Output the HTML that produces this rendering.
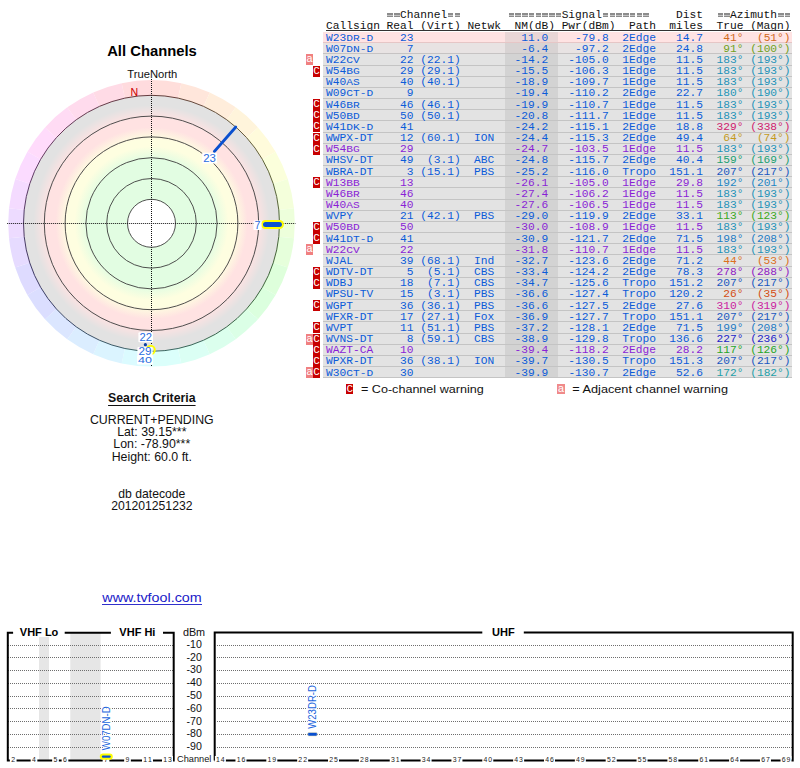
<!DOCTYPE html>
<html><head><meta charset="utf-8">
<style>
html,body{margin:0;padding:0;background:#fff;}
body{width:800px;height:768px;overflow:hidden;position:relative;}
.mono{font-family:"Liberation Mono",monospace;font-size:11.23px;white-space:pre;position:absolute;left:326px;line-height:11px;}
.sm{display:inline-block;transform:scaleY(0.87);transform-origin:50% 78%;}
.g{color:#a8a8a8;}
.hd{color:#111;}
.row{position:absolute;left:323px;width:469px;}
.badge{position:absolute;font-family:"Liberation Mono",monospace;color:#fff;font-size:11px;text-align:center;line-height:11px;}
.sans{font-family:"Liberation Sans",sans-serif;position:absolute;white-space:pre;}
</style></head><body>

<div style="position:absolute;left:387.26px;top:13.0px;width:5.5px;height:1.6px;background:#8c8c8c;"></div>
<div style="position:absolute;left:387.26px;top:15.4px;width:5.5px;height:1.6px;background:#8c8c8c;"></div>
<div style="position:absolute;left:387.26px;top:14.6px;width:5.5px;height:0.8px;background:#c4c4c4;"></div>
<div style="position:absolute;left:394.00px;top:13.0px;width:5.5px;height:1.6px;background:#8c8c8c;"></div>
<div style="position:absolute;left:394.00px;top:15.4px;width:5.5px;height:1.6px;background:#8c8c8c;"></div>
<div style="position:absolute;left:394.00px;top:14.6px;width:5.5px;height:0.8px;background:#c4c4c4;"></div>
<div style="position:absolute;left:447.92px;top:13.0px;width:5.5px;height:1.6px;background:#8c8c8c;"></div>
<div style="position:absolute;left:447.92px;top:15.4px;width:5.5px;height:1.6px;background:#8c8c8c;"></div>
<div style="position:absolute;left:447.92px;top:14.6px;width:5.5px;height:0.8px;background:#c4c4c4;"></div>
<div style="position:absolute;left:454.66px;top:13.0px;width:5.5px;height:1.6px;background:#8c8c8c;"></div>
<div style="position:absolute;left:454.66px;top:15.4px;width:5.5px;height:1.6px;background:#8c8c8c;"></div>
<div style="position:absolute;left:454.66px;top:14.6px;width:5.5px;height:0.8px;background:#c4c4c4;"></div>
<div style="position:absolute;left:508.58px;top:13.0px;width:5.5px;height:1.6px;background:#8c8c8c;"></div>
<div style="position:absolute;left:508.58px;top:15.4px;width:5.5px;height:1.6px;background:#8c8c8c;"></div>
<div style="position:absolute;left:508.58px;top:14.6px;width:5.5px;height:0.8px;background:#c4c4c4;"></div>
<div style="position:absolute;left:515.32px;top:13.0px;width:5.5px;height:1.6px;background:#8c8c8c;"></div>
<div style="position:absolute;left:515.32px;top:15.4px;width:5.5px;height:1.6px;background:#8c8c8c;"></div>
<div style="position:absolute;left:515.32px;top:14.6px;width:5.5px;height:0.8px;background:#c4c4c4;"></div>
<div style="position:absolute;left:522.06px;top:13.0px;width:5.5px;height:1.6px;background:#8c8c8c;"></div>
<div style="position:absolute;left:522.06px;top:15.4px;width:5.5px;height:1.6px;background:#8c8c8c;"></div>
<div style="position:absolute;left:522.06px;top:14.6px;width:5.5px;height:0.8px;background:#c4c4c4;"></div>
<div style="position:absolute;left:528.80px;top:13.0px;width:5.5px;height:1.6px;background:#8c8c8c;"></div>
<div style="position:absolute;left:528.80px;top:15.4px;width:5.5px;height:1.6px;background:#8c8c8c;"></div>
<div style="position:absolute;left:528.80px;top:14.6px;width:5.5px;height:0.8px;background:#c4c4c4;"></div>
<div style="position:absolute;left:535.54px;top:13.0px;width:5.5px;height:1.6px;background:#8c8c8c;"></div>
<div style="position:absolute;left:535.54px;top:15.4px;width:5.5px;height:1.6px;background:#8c8c8c;"></div>
<div style="position:absolute;left:535.54px;top:14.6px;width:5.5px;height:0.8px;background:#c4c4c4;"></div>
<div style="position:absolute;left:542.28px;top:13.0px;width:5.5px;height:1.6px;background:#8c8c8c;"></div>
<div style="position:absolute;left:542.28px;top:15.4px;width:5.5px;height:1.6px;background:#8c8c8c;"></div>
<div style="position:absolute;left:542.28px;top:14.6px;width:5.5px;height:0.8px;background:#c4c4c4;"></div>
<div style="position:absolute;left:549.02px;top:13.0px;width:5.5px;height:1.6px;background:#8c8c8c;"></div>
<div style="position:absolute;left:549.02px;top:15.4px;width:5.5px;height:1.6px;background:#8c8c8c;"></div>
<div style="position:absolute;left:549.02px;top:14.6px;width:5.5px;height:0.8px;background:#c4c4c4;"></div>
<div style="position:absolute;left:555.76px;top:13.0px;width:5.5px;height:1.6px;background:#8c8c8c;"></div>
<div style="position:absolute;left:555.76px;top:15.4px;width:5.5px;height:1.6px;background:#8c8c8c;"></div>
<div style="position:absolute;left:555.76px;top:14.6px;width:5.5px;height:0.8px;background:#c4c4c4;"></div>
<div style="position:absolute;left:602.94px;top:13.0px;width:5.5px;height:1.6px;background:#8c8c8c;"></div>
<div style="position:absolute;left:602.94px;top:15.4px;width:5.5px;height:1.6px;background:#8c8c8c;"></div>
<div style="position:absolute;left:602.94px;top:14.6px;width:5.5px;height:0.8px;background:#c4c4c4;"></div>
<div style="position:absolute;left:609.68px;top:13.0px;width:5.5px;height:1.6px;background:#8c8c8c;"></div>
<div style="position:absolute;left:609.68px;top:15.4px;width:5.5px;height:1.6px;background:#8c8c8c;"></div>
<div style="position:absolute;left:609.68px;top:14.6px;width:5.5px;height:0.8px;background:#c4c4c4;"></div>
<div style="position:absolute;left:616.42px;top:13.0px;width:5.5px;height:1.6px;background:#8c8c8c;"></div>
<div style="position:absolute;left:616.42px;top:15.4px;width:5.5px;height:1.6px;background:#8c8c8c;"></div>
<div style="position:absolute;left:616.42px;top:14.6px;width:5.5px;height:0.8px;background:#c4c4c4;"></div>
<div style="position:absolute;left:623.16px;top:13.0px;width:5.5px;height:1.6px;background:#8c8c8c;"></div>
<div style="position:absolute;left:623.16px;top:15.4px;width:5.5px;height:1.6px;background:#8c8c8c;"></div>
<div style="position:absolute;left:623.16px;top:14.6px;width:5.5px;height:0.8px;background:#c4c4c4;"></div>
<div style="position:absolute;left:629.90px;top:13.0px;width:5.5px;height:1.6px;background:#8c8c8c;"></div>
<div style="position:absolute;left:629.90px;top:15.4px;width:5.5px;height:1.6px;background:#8c8c8c;"></div>
<div style="position:absolute;left:629.90px;top:14.6px;width:5.5px;height:0.8px;background:#c4c4c4;"></div>
<div style="position:absolute;left:636.64px;top:13.0px;width:5.5px;height:1.6px;background:#8c8c8c;"></div>
<div style="position:absolute;left:636.64px;top:15.4px;width:5.5px;height:1.6px;background:#8c8c8c;"></div>
<div style="position:absolute;left:636.64px;top:14.6px;width:5.5px;height:0.8px;background:#c4c4c4;"></div>
<div style="position:absolute;left:643.38px;top:13.0px;width:5.5px;height:1.6px;background:#8c8c8c;"></div>
<div style="position:absolute;left:643.38px;top:15.4px;width:5.5px;height:1.6px;background:#8c8c8c;"></div>
<div style="position:absolute;left:643.38px;top:14.6px;width:5.5px;height:0.8px;background:#c4c4c4;"></div>
<div style="position:absolute;left:717.52px;top:13.0px;width:5.5px;height:1.6px;background:#8c8c8c;"></div>
<div style="position:absolute;left:717.52px;top:15.4px;width:5.5px;height:1.6px;background:#8c8c8c;"></div>
<div style="position:absolute;left:717.52px;top:14.6px;width:5.5px;height:0.8px;background:#c4c4c4;"></div>
<div style="position:absolute;left:724.26px;top:13.0px;width:5.5px;height:1.6px;background:#8c8c8c;"></div>
<div style="position:absolute;left:724.26px;top:15.4px;width:5.5px;height:1.6px;background:#8c8c8c;"></div>
<div style="position:absolute;left:724.26px;top:14.6px;width:5.5px;height:0.8px;background:#c4c4c4;"></div>
<div style="position:absolute;left:778.18px;top:13.0px;width:5.5px;height:1.6px;background:#8c8c8c;"></div>
<div style="position:absolute;left:778.18px;top:15.4px;width:5.5px;height:1.6px;background:#8c8c8c;"></div>
<div style="position:absolute;left:778.18px;top:14.6px;width:5.5px;height:0.8px;background:#c4c4c4;"></div>
<div style="position:absolute;left:784.92px;top:13.0px;width:5.5px;height:1.6px;background:#8c8c8c;"></div>
<div style="position:absolute;left:784.92px;top:15.4px;width:5.5px;height:1.6px;background:#8c8c8c;"></div>
<div style="position:absolute;left:784.92px;top:14.6px;width:5.5px;height:0.8px;background:#c4c4c4;"></div>
<div class="mono hd" style="top:9.8px;">           Channel                 Signal           Dist    Azimuth  </div>
<div class="mono hd" style="top:20.7px;">Callsign Real (Virt) Netwk  NM(dB) Pwr(dBm)  Path  miles  True (Magn)</div>
<div style="position:absolute;left:326px;top:29.8px;width:465px;height:1px;background:#333;"></div>
<div class="row" style="top:32.00px;height:11.17px;background:#ffe3e3;"></div>
<div class="row" style="left:504.5px;width:53.5px;top:32.00px;height:11.17px;background:#e9d6d6;"></div>
<div class="row" style="top:42.17px;height:1px;background:#e6c6c6;"></div>
<div class="mono" style="top:32.60px;color:#0b5bd9;">W23<span class="sm">DR-D</span>    23                11.0    -79.8  2Edge   14.7   <span style="color:#d06a20">41°  (51°)</span></div>
<div class="row" style="top:43.17px;height:11.17px;background:#e8e3e3;"></div>
<div class="row" style="left:504.5px;width:53.5px;top:43.17px;height:11.17px;background:#d8d3d3;"></div>
<div class="row" style="top:53.33px;height:1px;background:#c6c3c3;"></div>
<div class="mono" style="top:43.77px;color:#0b5bd9;">W07<span class="sm">DN-D</span>     7                -6.4    -97.2  2Edge   24.8   <span style="color:#72a020">91° (100°)</span></div>
<div class="row" style="top:54.33px;height:11.17px;background:#e3e3e3;"></div>
<div class="row" style="left:504.5px;width:53.5px;top:54.33px;height:11.17px;background:#d3d3d3;"></div>
<div class="row" style="top:64.50px;height:1px;background:#c4c4c4;"></div>
<div class="mono" style="top:54.93px;color:#0b5bd9;">W22<span class="sm">CV</span>      22 (22.1)        -14.2   -105.0  1Edge   11.5  <span style="color:#1f92b8">183° (193°)</span></div>
<div class="badge" style="left:306px;top:54.33px;width:7px;height:11.17px;background:#f08080;">a</div>
<div class="row" style="top:65.50px;height:11.17px;background:#e3e3e3;"></div>
<div class="row" style="left:504.5px;width:53.5px;top:65.50px;height:11.17px;background:#d3d3d3;"></div>
<div class="row" style="top:75.67px;height:1px;background:#c4c4c4;"></div>
<div class="mono" style="top:66.10px;color:#0b5bd9;">W54<span class="sm">BG</span>      29 (29.1)        -15.5   -106.3  1Edge   11.5  <span style="color:#1f92b8">183° (193°)</span></div>
<div class="badge" style="left:313px;top:65.50px;width:7px;height:11.17px;background:#c70000;">C</div>
<div class="row" style="top:76.67px;height:11.17px;background:#e3e3e3;"></div>
<div class="row" style="left:504.5px;width:53.5px;top:76.67px;height:11.17px;background:#d3d3d3;"></div>
<div class="row" style="top:86.84px;height:1px;background:#c4c4c4;"></div>
<div class="mono" style="top:77.27px;color:#0b5bd9;">W40<span class="sm">AS</span>      40 (40.1)        -18.9   -109.7  1Edge   11.5  <span style="color:#1f92b8">183° (193°)</span></div>
<div class="row" style="top:87.84px;height:11.17px;background:#e3e3e3;"></div>
<div class="row" style="left:504.5px;width:53.5px;top:87.84px;height:11.17px;background:#d3d3d3;"></div>
<div class="row" style="top:98.00px;height:1px;background:#c4c4c4;"></div>
<div class="mono" style="top:88.44px;color:#0b5bd9;">W09<span class="sm">CT-D</span>     9               -19.4   -110.2  2Edge   22.7  <span style="color:#1f96b8">180° (190°)</span></div>
<div class="row" style="top:99.00px;height:11.17px;background:#e3e3e3;"></div>
<div class="row" style="left:504.5px;width:53.5px;top:99.00px;height:11.17px;background:#d3d3d3;"></div>
<div class="row" style="top:109.17px;height:1px;background:#c4c4c4;"></div>
<div class="mono" style="top:99.60px;color:#0b5bd9;">W46<span class="sm">BR</span>      46 (46.1)        -19.9   -110.7  1Edge   11.5  <span style="color:#1f92b8">183° (193°)</span></div>
<div class="badge" style="left:313px;top:99.00px;width:7px;height:11.17px;background:#c70000;">C</div>
<div class="row" style="top:110.17px;height:11.17px;background:#e3e3e3;"></div>
<div class="row" style="left:504.5px;width:53.5px;top:110.17px;height:11.17px;background:#d3d3d3;"></div>
<div class="row" style="top:120.34px;height:1px;background:#c4c4c4;"></div>
<div class="mono" style="top:110.77px;color:#0b5bd9;">W50<span class="sm">BD</span>      50 (50.1)        -20.8   -111.7  1Edge   11.5  <span style="color:#1f92b8">183° (193°)</span></div>
<div class="badge" style="left:313px;top:110.17px;width:7px;height:11.17px;background:#c70000;">C</div>
<div class="row" style="top:121.34px;height:11.17px;background:#e3e3e3;"></div>
<div class="row" style="left:504.5px;width:53.5px;top:121.34px;height:11.17px;background:#d3d3d3;"></div>
<div class="row" style="top:131.50px;height:1px;background:#c4c4c4;"></div>
<div class="mono" style="top:121.94px;color:#0b5bd9;">W41<span class="sm">DK-D</span>    41               -24.2   -115.1  2Edge   18.8  <span style="color:#d0206e">329° (338°)</span></div>
<div class="badge" style="left:313px;top:121.34px;width:7px;height:11.17px;background:#c70000;">C</div>
<div class="row" style="top:132.50px;height:11.17px;background:#e3e3e3;"></div>
<div class="row" style="left:504.5px;width:53.5px;top:132.50px;height:11.17px;background:#d3d3d3;"></div>
<div class="row" style="top:142.67px;height:1px;background:#c4c4c4;"></div>
<div class="mono" style="top:133.10px;color:#0b5bd9;">WWPX-DT    12 (60.1)  ION   -24.4   -115.3  2Edge   49.4   <span style="color:#c49a1e">64°  (74°)</span></div>
<div class="badge" style="left:313px;top:132.50px;width:7px;height:11.17px;background:#c70000;">C</div>
<div class="row" style="top:143.67px;height:11.17px;background:#e3e3e3;"></div>
<div class="row" style="left:504.5px;width:53.5px;top:143.67px;height:11.17px;background:#d3d3d3;"></div>
<div class="row" style="top:153.84px;height:1px;background:#c4c4c4;"></div>
<div class="mono" style="top:144.27px;color:#8a1fd6;">W54<span class="sm">BG</span>      29               -24.7   -103.5  1Edge   11.5  <span style="color:#1f92b8">183° (193°)</span></div>
<div class="badge" style="left:313px;top:143.67px;width:7px;height:11.17px;background:#c70000;">C</div>
<div class="row" style="top:154.84px;height:11.17px;background:#e3e3e3;"></div>
<div class="row" style="left:504.5px;width:53.5px;top:154.84px;height:11.17px;background:#d3d3d3;"></div>
<div class="row" style="top:165.00px;height:1px;background:#c4c4c4;"></div>
<div class="mono" style="top:155.44px;color:#0b5bd9;">WHSV-DT    49  (3.1)  ABC   -24.8   -115.7  2Edge   40.4  <span style="color:#20a070">159° (169°)</span></div>
<div class="row" style="top:166.00px;height:11.17px;background:#e3e3e3;"></div>
<div class="row" style="left:504.5px;width:53.5px;top:166.00px;height:11.17px;background:#d3d3d3;"></div>
<div class="row" style="top:176.17px;height:1px;background:#c4c4c4;"></div>
<div class="mono" style="top:166.60px;color:#0b5bd9;">WBRA-DT     3 (15.1)  PBS   -25.2   -116.0  Tropo  151.1  <span style="color:#1a58c0">207° (217°)</span></div>
<div class="row" style="top:177.17px;height:11.17px;background:#e3e3e3;"></div>
<div class="row" style="left:504.5px;width:53.5px;top:177.17px;height:11.17px;background:#d3d3d3;"></div>
<div class="row" style="top:187.34px;height:1px;background:#c4c4c4;"></div>
<div class="mono" style="top:177.77px;color:#8a1fd6;">W13<span class="sm">BB</span>      13               -26.1   -105.0  1Edge   29.8  <span style="color:#1e86c4">192° (201°)</span></div>
<div class="badge" style="left:313px;top:177.17px;width:7px;height:11.17px;background:#c70000;">C</div>
<div class="row" style="top:188.34px;height:11.17px;background:#e3e3e3;"></div>
<div class="row" style="left:504.5px;width:53.5px;top:188.34px;height:11.17px;background:#d3d3d3;"></div>
<div class="row" style="top:198.50px;height:1px;background:#c4c4c4;"></div>
<div class="mono" style="top:188.94px;color:#8a1fd6;">W46<span class="sm">BR</span>      46               -27.4   -106.2  1Edge   11.5  <span style="color:#1f92b8">183° (193°)</span></div>
<div class="row" style="top:199.50px;height:11.17px;background:#e3e3e3;"></div>
<div class="row" style="left:504.5px;width:53.5px;top:199.50px;height:11.17px;background:#d3d3d3;"></div>
<div class="row" style="top:209.67px;height:1px;background:#c4c4c4;"></div>
<div class="mono" style="top:200.10px;color:#8a1fd6;">W40<span class="sm">AS</span>      40               -27.6   -106.5  1Edge   11.5  <span style="color:#1f92b8">183° (193°)</span></div>
<div class="row" style="top:210.67px;height:11.17px;background:#e3e3e3;"></div>
<div class="row" style="left:504.5px;width:53.5px;top:210.67px;height:11.17px;background:#d3d3d3;"></div>
<div class="row" style="top:220.84px;height:1px;background:#c4c4c4;"></div>
<div class="mono" style="top:211.27px;color:#0b5bd9;">WVPY       21 (42.1)  PBS   -29.0   -119.9  2Edge   33.1  <span style="color:#3aa820">113° (123°)</span></div>
<div class="row" style="top:221.84px;height:11.17px;background:#e3e3e3;"></div>
<div class="row" style="left:504.5px;width:53.5px;top:221.84px;height:11.17px;background:#d3d3d3;"></div>
<div class="row" style="top:232.01px;height:1px;background:#c4c4c4;"></div>
<div class="mono" style="top:222.44px;color:#8a1fd6;">W50<span class="sm">BD</span>      50               -30.0   -108.9  1Edge   11.5  <span style="color:#1f92b8">183° (193°)</span></div>
<div class="badge" style="left:313px;top:221.84px;width:7px;height:11.17px;background:#c70000;">C</div>
<div class="row" style="top:233.01px;height:11.17px;background:#e3e3e3;"></div>
<div class="row" style="left:504.5px;width:53.5px;top:233.01px;height:11.17px;background:#d3d3d3;"></div>
<div class="row" style="top:243.17px;height:1px;background:#c4c4c4;"></div>
<div class="mono" style="top:233.61px;color:#0b5bd9;">W41<span class="sm">DT-D</span>    41               -30.9   -121.7  2Edge   71.5  <span style="color:#1e7cc4">198° (208°)</span></div>
<div class="badge" style="left:313px;top:233.01px;width:7px;height:11.17px;background:#c70000;">C</div>
<div class="row" style="top:244.17px;height:11.17px;background:#e3e3e3;"></div>
<div class="row" style="left:504.5px;width:53.5px;top:244.17px;height:11.17px;background:#d3d3d3;"></div>
<div class="row" style="top:254.34px;height:1px;background:#c4c4c4;"></div>
<div class="mono" style="top:244.77px;color:#8a1fd6;">W22<span class="sm">CV</span>      22               -31.8   -110.7  1Edge   11.5  <span style="color:#1f92b8">183° (193°)</span></div>
<div class="badge" style="left:306px;top:244.17px;width:7px;height:11.17px;background:#f08080;">a</div>
<div class="row" style="top:255.34px;height:11.17px;background:#e3e3e3;"></div>
<div class="row" style="left:504.5px;width:53.5px;top:255.34px;height:11.17px;background:#d3d3d3;"></div>
<div class="row" style="top:265.51px;height:1px;background:#c4c4c4;"></div>
<div class="mono" style="top:255.94px;color:#0b5bd9;">WJAL       39 (68.1)  Ind   -32.7   -123.6  2Edge   71.2   <span style="color:#dc7020">44°  (53°)</span></div>
<div class="row" style="top:266.51px;height:11.17px;background:#e3e3e3;"></div>
<div class="row" style="left:504.5px;width:53.5px;top:266.51px;height:11.17px;background:#d3d3d3;"></div>
<div class="row" style="top:276.67px;height:1px;background:#c4c4c4;"></div>
<div class="mono" style="top:267.11px;color:#0b5bd9;">WDTV-DT     5  (5.1)  CBS   -33.4   -124.2  2Edge   78.3  <span style="color:#9020c4">278° (288°)</span></div>
<div class="badge" style="left:313px;top:266.51px;width:7px;height:11.17px;background:#c70000;">C</div>
<div class="row" style="top:277.67px;height:11.17px;background:#e3e3e3;"></div>
<div class="row" style="left:504.5px;width:53.5px;top:277.67px;height:11.17px;background:#d3d3d3;"></div>
<div class="row" style="top:287.84px;height:1px;background:#c4c4c4;"></div>
<div class="mono" style="top:278.27px;color:#0b5bd9;">WDBJ       18  (7.1)  CBS   -34.7   -125.6  Tropo  151.2  <span style="color:#1a58c0">207° (217°)</span></div>
<div class="badge" style="left:313px;top:277.67px;width:7px;height:11.17px;background:#c70000;">C</div>
<div class="row" style="top:288.84px;height:11.17px;background:#e3e3e3;"></div>
<div class="row" style="left:504.5px;width:53.5px;top:288.84px;height:11.17px;background:#d3d3d3;"></div>
<div class="row" style="top:299.01px;height:1px;background:#c4c4c4;"></div>
<div class="mono" style="top:289.44px;color:#0b5bd9;">WPSU-TV    15  (3.1)  PBS   -36.6   -127.4  Tropo  120.2   <span style="color:#d44e14">26°  (35°)</span></div>
<div class="row" style="top:300.01px;height:11.17px;background:#e3e3e3;"></div>
<div class="row" style="left:504.5px;width:53.5px;top:300.01px;height:11.17px;background:#d3d3d3;"></div>
<div class="row" style="top:310.17px;height:1px;background:#c4c4c4;"></div>
<div class="mono" style="top:300.61px;color:#0b5bd9;">WGPT       36 (36.1)  PBS   -36.6   -127.5  2Edge   27.6  <span style="color:#cc20a0">310° (319°)</span></div>
<div class="badge" style="left:313px;top:300.01px;width:7px;height:11.17px;background:#c70000;">C</div>
<div class="row" style="top:311.18px;height:11.17px;background:#e3e3e3;"></div>
<div class="row" style="left:504.5px;width:53.5px;top:311.18px;height:11.17px;background:#d3d3d3;"></div>
<div class="row" style="top:321.34px;height:1px;background:#c4c4c4;"></div>
<div class="mono" style="top:311.78px;color:#0b5bd9;">WFXR-DT    17 (27.1)  Fox   -36.9   -127.7  Tropo  151.1  <span style="color:#1a58c0">207° (217°)</span></div>
<div class="row" style="top:322.34px;height:11.17px;background:#e3e3e3;"></div>
<div class="row" style="left:504.5px;width:53.5px;top:322.34px;height:11.17px;background:#d3d3d3;"></div>
<div class="row" style="top:332.51px;height:1px;background:#c4c4c4;"></div>
<div class="mono" style="top:322.94px;color:#0b5bd9;">WVPT       11 (51.1)  PBS   -37.2   -128.1  2Edge   71.5  <span style="color:#1e7ac4">199° (208°)</span></div>
<div class="badge" style="left:313px;top:322.34px;width:7px;height:11.17px;background:#c70000;">C</div>
<div class="row" style="top:333.51px;height:11.17px;background:#e3e3e3;"></div>
<div class="row" style="left:504.5px;width:53.5px;top:333.51px;height:11.17px;background:#d3d3d3;"></div>
<div class="row" style="top:343.68px;height:1px;background:#c4c4c4;"></div>
<div class="mono" style="top:334.11px;color:#0b5bd9;">WVNS-DT     8 (59.1)  CBS   -38.9   -129.8  Tropo  136.6  <span style="color:#2424c8">227° (236°)</span></div>
<div class="badge" style="left:306px;top:333.51px;width:7px;height:11.17px;background:#f08080;">a</div>
<div class="badge" style="left:313px;top:333.51px;width:7px;height:11.17px;background:#c70000;">C</div>
<div class="row" style="top:344.68px;height:11.17px;background:#e3e3e3;"></div>
<div class="row" style="left:504.5px;width:53.5px;top:344.68px;height:11.17px;background:#d3d3d3;"></div>
<div class="row" style="top:354.84px;height:1px;background:#c4c4c4;"></div>
<div class="mono" style="top:345.28px;color:#8a1fd6;">WAZT-CA    10               -39.4   -118.2  2Edge   28.2  <span style="color:#26a626">117° (126°)</span></div>
<div class="badge" style="left:313px;top:344.68px;width:7px;height:11.17px;background:#c70000;">C</div>
<div class="row" style="top:355.84px;height:11.17px;background:#e3e3e3;"></div>
<div class="row" style="left:504.5px;width:53.5px;top:355.84px;height:11.17px;background:#d3d3d3;"></div>
<div class="row" style="top:366.01px;height:1px;background:#c4c4c4;"></div>
<div class="mono" style="top:356.44px;color:#0b5bd9;">WPXR-DT    36 (38.1)  ION   -39.7   -130.5  Tropo  151.3  <span style="color:#1a58c0">207° (217°)</span></div>
<div class="badge" style="left:313px;top:355.84px;width:7px;height:11.17px;background:#c70000;">C</div>
<div class="row" style="top:367.01px;height:11.17px;background:#e3e3e3;"></div>
<div class="row" style="left:504.5px;width:53.5px;top:367.01px;height:11.17px;background:#d3d3d3;"></div>
<div class="row" style="top:377.18px;height:1px;background:#c4c4c4;"></div>
<div class="mono" style="top:367.61px;color:#0b5bd9;">W30<span class="sm">CT-D</span>    30               -39.9   -130.7  2Edge   52.6  <span style="color:#1fa0a8">172° (182°)</span></div>
<div class="badge" style="left:306px;top:367.01px;width:7px;height:11.17px;background:#f08080;">a</div>
<div class="badge" style="left:313px;top:367.01px;width:7px;height:11.17px;background:#c70000;">C</div>
<div class="badge" style="left:346.2px;top:383.7px;width:7px;height:10px;background:#c70000;">C</div>
<svg style="position:absolute;left:0;top:0" width="800" height="400"><text x="361" y="393" font-family="Liberation Sans" font-size="11.4" fill="#111" textLength="122.7" lengthAdjust="spacingAndGlyphs">= Co-channel warning</text><text x="572.3" y="393" font-family="Liberation Sans" font-size="11.4" fill="#111" textLength="155.7" lengthAdjust="spacingAndGlyphs">= Adjacent channel warning</text></svg>
<div class="badge" style="left:557px;top:383.7px;width:8px;height:10px;background:#f08a8a;">a</div>
<div class="sans" style="left:152.0px;top:43.0px;width:300px;margin-left:-150px;text-align:center;font-size:14.80px;font-weight:bold;color:#000;">All Channels</div>
<div class="sans" style="left:152.3px;top:68.2px;width:300px;margin-left:-150px;text-align:center;font-size:11.20px;color:#111;">TrueNorth</div>
<div class="sans" style="left:151.8px;top:390.5px;width:300px;margin-left:-150px;text-align:center;font-size:12.30px;font-weight:bold;color:#111;"><span style="text-decoration:underline;text-underline-offset:2.8px;text-decoration-thickness:1.3px;">Search Criteria</span></div>
<div class="sans" style="left:151.8px;top:412.8px;width:300px;margin-left:-150px;text-align:center;font-size:12.35px;color:#111;">CURRENT+PENDING</div>
<div class="sans" style="left:151.8px;top:425.1px;width:300px;margin-left:-150px;text-align:center;font-size:12.35px;color:#111;">Lat: 39.15***</div>
<div class="sans" style="left:151.8px;top:437.3px;width:300px;margin-left:-150px;text-align:center;font-size:12.35px;color:#111;">Lon: -78.90***</div>
<div class="sans" style="left:151.8px;top:449.6px;width:300px;margin-left:-150px;text-align:center;font-size:12.35px;color:#111;">Height: 60.0 ft.</div>
<div class="sans" style="left:151.8px;top:486.6px;width:300px;margin-left:-150px;text-align:center;font-size:12.20px;color:#111;">db datecode</div>
<div class="sans" style="left:151.8px;top:498.6px;width:300px;margin-left:-150px;text-align:center;font-size:12.20px;color:#111;">201201251232</div>
<svg style="position:absolute;left:0;top:580px" width="300" height="40"><text x="102.3" y="21.8" font-family="Liberation Sans" font-size="13.2" fill="#2020c8" textLength="99.4" lengthAdjust="spacingAndGlyphs">www.tvfool.com</text><rect x="102" y="24" width="100" height="1" fill="#3030cc"/></svg>
<svg style="position:absolute;left:0;top:0" width="800" height="768">
<defs><radialGradient id="rg" gradientUnits="userSpaceOnUse" cx="151.5" cy="223.3" r="128">
<stop offset="0.0000" stop-color="#e2fde2"/>
<stop offset="0.5000" stop-color="#e2fde2"/>
<stop offset="0.6016" stop-color="#fefee0"/>
<stop offset="0.6562" stop-color="#fefee0"/>
<stop offset="0.7500" stop-color="#ffe2e2"/>
<stop offset="0.8203" stop-color="#ffe2e2"/>
<stop offset="0.9219" stop-color="#e2e2e2"/>
<stop offset="1.0000" stop-color="#e2e2e2"/>
</radialGradient></defs>
<path d="M151.50 80.00 A143.3 143.3 0 0 1 181.29 83.13 L178.11 98.10 A128.0 128.0 0 0 0 151.50 95.30 Z" fill="#ffdedb"/>
<path d="M181.29 83.13 A143.3 143.3 0 0 1 209.79 92.39 L203.56 106.37 A128.0 128.0 0 0 0 178.11 98.10 Z" fill="#ffe6db"/>
<path d="M209.79 92.39 A143.3 143.3 0 0 1 235.73 107.37 L226.74 119.75 A128.0 128.0 0 0 0 203.56 106.37 Z" fill="#ffeddb"/>
<path d="M235.73 107.37 A143.3 143.3 0 0 1 257.99 127.41 L246.62 137.65 A128.0 128.0 0 0 0 226.74 119.75 Z" fill="#fff4db"/>
<path d="M257.99 127.41 A143.3 143.3 0 0 1 275.60 151.65 L262.35 159.30 A128.0 128.0 0 0 0 246.62 137.65 Z" fill="#fffbdb"/>
<path d="M275.60 151.65 A143.3 143.3 0 0 1 287.79 179.02 L273.24 183.75 A128.0 128.0 0 0 0 262.35 159.30 Z" fill="#fbffdb"/>
<path d="M287.79 179.02 A143.3 143.3 0 0 1 294.01 208.32 L278.80 209.92 A128.0 128.0 0 0 0 273.24 183.75 Z" fill="#f4ffdb"/>
<path d="M294.01 208.32 A143.3 143.3 0 0 1 294.01 238.28 L278.80 236.68 A128.0 128.0 0 0 0 278.80 209.92 Z" fill="#edffdb"/>
<path d="M294.01 238.28 A143.3 143.3 0 0 1 287.79 267.58 L273.24 262.85 A128.0 128.0 0 0 0 278.80 236.68 Z" fill="#e6ffdb"/>
<path d="M287.79 267.58 A143.3 143.3 0 0 1 275.60 294.95 L262.35 287.30 A128.0 128.0 0 0 0 273.24 262.85 Z" fill="#deffdb"/>
<path d="M275.60 294.95 A143.3 143.3 0 0 1 257.99 319.19 L246.62 308.95 A128.0 128.0 0 0 0 262.35 287.30 Z" fill="#dbffde"/>
<path d="M257.99 319.19 A143.3 143.3 0 0 1 235.73 339.23 L226.74 326.85 A128.0 128.0 0 0 0 246.62 308.95 Z" fill="#dbffe6"/>
<path d="M235.73 339.23 A143.3 143.3 0 0 1 209.79 354.21 L203.56 340.23 A128.0 128.0 0 0 0 226.74 326.85 Z" fill="#dbffed"/>
<path d="M209.79 354.21 A143.3 143.3 0 0 1 181.29 363.47 L178.11 348.50 A128.0 128.0 0 0 0 203.56 340.23 Z" fill="#dbfff4"/>
<path d="M181.29 363.47 A143.3 143.3 0 0 1 151.50 366.60 L151.50 351.30 A128.0 128.0 0 0 0 178.11 348.50 Z" fill="#dbfffb"/>
<path d="M151.50 366.60 A143.3 143.3 0 0 1 121.71 363.47 L124.89 348.50 A128.0 128.0 0 0 0 151.50 351.30 Z" fill="#dbfbff"/>
<path d="M121.71 363.47 A143.3 143.3 0 0 1 93.21 354.21 L99.44 340.23 A128.0 128.0 0 0 0 124.89 348.50 Z" fill="#dbf4ff"/>
<path d="M93.21 354.21 A143.3 143.3 0 0 1 67.27 339.23 L76.26 326.85 A128.0 128.0 0 0 0 99.44 340.23 Z" fill="#dbedff"/>
<path d="M67.27 339.23 A143.3 143.3 0 0 1 45.01 319.19 L56.38 308.95 A128.0 128.0 0 0 0 76.26 326.85 Z" fill="#dbe6ff"/>
<path d="M45.01 319.19 A143.3 143.3 0 0 1 27.40 294.95 L40.65 287.30 A128.0 128.0 0 0 0 56.38 308.95 Z" fill="#dbdeff"/>
<path d="M27.40 294.95 A143.3 143.3 0 0 1 15.21 267.58 L29.76 262.85 A128.0 128.0 0 0 0 40.65 287.30 Z" fill="#dedbff"/>
<path d="M15.21 267.58 A143.3 143.3 0 0 1 8.99 238.28 L24.20 236.68 A128.0 128.0 0 0 0 29.76 262.85 Z" fill="#e6dbff"/>
<path d="M8.99 238.28 A143.3 143.3 0 0 1 8.99 208.32 L24.20 209.92 A128.0 128.0 0 0 0 24.20 236.68 Z" fill="#eddbff"/>
<path d="M8.99 208.32 A143.3 143.3 0 0 1 15.21 179.02 L29.76 183.75 A128.0 128.0 0 0 0 24.20 209.92 Z" fill="#f4dbff"/>
<path d="M15.21 179.02 A143.3 143.3 0 0 1 27.40 151.65 L40.65 159.30 A128.0 128.0 0 0 0 29.76 183.75 Z" fill="#fbdbff"/>
<path d="M27.40 151.65 A143.3 143.3 0 0 1 45.01 127.41 L56.38 137.65 A128.0 128.0 0 0 0 40.65 159.30 Z" fill="#ffdbfb"/>
<path d="M45.01 127.41 A143.3 143.3 0 0 1 67.27 107.37 L76.26 119.75 A128.0 128.0 0 0 0 56.38 137.65 Z" fill="#ffdbf4"/>
<path d="M67.27 107.37 A143.3 143.3 0 0 1 93.21 92.39 L99.44 106.37 A128.0 128.0 0 0 0 76.26 119.75 Z" fill="#ffdbed"/>
<path d="M93.21 92.39 A143.3 143.3 0 0 1 121.71 83.13 L124.89 98.10 A128.0 128.0 0 0 0 99.44 106.37 Z" fill="#ffdbe6"/>
<path d="M121.71 83.13 A143.3 143.3 0 0 1 151.50 80.00 L151.50 95.30 A128.0 128.0 0 0 0 124.89 98.10 Z" fill="#ffdbde"/>
<circle cx="151.5" cy="223.3" r="128" fill="url(#rg)"/>
<circle cx="151.5" cy="223.3" r="24" fill="#fff"/>
<circle cx="151.5" cy="223.3" r="24.0" fill="none" stroke="#3c3c3c" stroke-width="0.9"/>
<circle cx="151.5" cy="223.3" r="44.8" fill="none" stroke="#3c3c3c" stroke-width="0.9"/>
<circle cx="151.5" cy="223.3" r="65.6" fill="none" stroke="#3c3c3c" stroke-width="0.9"/>
<circle cx="151.5" cy="223.3" r="86.4" fill="none" stroke="#3c3c3c" stroke-width="0.9"/>
<circle cx="151.5" cy="223.3" r="107.2" fill="none" stroke="#3c3c3c" stroke-width="0.9"/>
<path d="M151.50 95.30 A128 128 0 0 1 178.11 98.10" fill="none" stroke="#5e3530" stroke-width="0.95"/>
<path d="M178.11 98.10 A128 128 0 0 1 203.56 106.37" fill="none" stroke="#5e3e30" stroke-width="0.95"/>
<path d="M203.56 106.37 A128 128 0 0 1 226.74 119.75" fill="none" stroke="#5e4730" stroke-width="0.95"/>
<path d="M226.74 119.75 A128 128 0 0 1 246.62 137.65" fill="none" stroke="#5e5030" stroke-width="0.95"/>
<path d="M246.62 137.65 A128 128 0 0 1 262.35 159.30" fill="none" stroke="#5e5930" stroke-width="0.95"/>
<path d="M262.35 159.30 A128 128 0 0 1 273.24 183.75" fill="none" stroke="#595e30" stroke-width="0.95"/>
<path d="M273.24 183.75 A128 128 0 0 1 278.80 209.92" fill="none" stroke="#505e30" stroke-width="0.95"/>
<path d="M278.80 209.92 A128 128 0 0 1 278.80 236.68" fill="none" stroke="#475e30" stroke-width="0.95"/>
<path d="M278.80 236.68 A128 128 0 0 1 273.24 262.85" fill="none" stroke="#3e5e30" stroke-width="0.95"/>
<path d="M273.24 262.85 A128 128 0 0 1 262.35 287.30" fill="none" stroke="#355e30" stroke-width="0.95"/>
<path d="M262.35 287.30 A128 128 0 0 1 246.62 308.95" fill="none" stroke="#305e35" stroke-width="0.95"/>
<path d="M246.62 308.95 A128 128 0 0 1 226.74 326.85" fill="none" stroke="#305e3e" stroke-width="0.95"/>
<path d="M226.74 326.85 A128 128 0 0 1 203.56 340.23" fill="none" stroke="#305e47" stroke-width="0.95"/>
<path d="M203.56 340.23 A128 128 0 0 1 178.11 348.50" fill="none" stroke="#305e50" stroke-width="0.95"/>
<path d="M178.11 348.50 A128 128 0 0 1 151.50 351.30" fill="none" stroke="#305e59" stroke-width="0.95"/>
<path d="M151.50 351.30 A128 128 0 0 1 124.89 348.50" fill="none" stroke="#30595e" stroke-width="0.95"/>
<path d="M124.89 348.50 A128 128 0 0 1 99.44 340.23" fill="none" stroke="#30505e" stroke-width="0.95"/>
<path d="M99.44 340.23 A128 128 0 0 1 76.26 326.85" fill="none" stroke="#30475e" stroke-width="0.95"/>
<path d="M76.26 326.85 A128 128 0 0 1 56.38 308.95" fill="none" stroke="#303e5e" stroke-width="0.95"/>
<path d="M56.38 308.95 A128 128 0 0 1 40.65 287.30" fill="none" stroke="#30355e" stroke-width="0.95"/>
<path d="M40.65 287.30 A128 128 0 0 1 29.76 262.85" fill="none" stroke="#35305e" stroke-width="0.95"/>
<path d="M29.76 262.85 A128 128 0 0 1 24.20 236.68" fill="none" stroke="#3e305e" stroke-width="0.95"/>
<path d="M24.20 236.68 A128 128 0 0 1 24.20 209.92" fill="none" stroke="#47305e" stroke-width="0.95"/>
<path d="M24.20 209.92 A128 128 0 0 1 29.76 183.75" fill="none" stroke="#50305e" stroke-width="0.95"/>
<path d="M29.76 183.75 A128 128 0 0 1 40.65 159.30" fill="none" stroke="#59305e" stroke-width="0.95"/>
<path d="M40.65 159.30 A128 128 0 0 1 56.38 137.65" fill="none" stroke="#5e3059" stroke-width="0.95"/>
<path d="M56.38 137.65 A128 128 0 0 1 76.26 119.75" fill="none" stroke="#5e3050" stroke-width="0.95"/>
<path d="M76.26 119.75 A128 128 0 0 1 99.44 106.37" fill="none" stroke="#5e3047" stroke-width="0.95"/>
<path d="M99.44 106.37 A128 128 0 0 1 124.89 98.10" fill="none" stroke="#5e303e" stroke-width="0.95"/>
<path d="M124.89 98.10 A128 128 0 0 1 151.50 95.30" fill="none" stroke="#5e3035" stroke-width="0.95"/>
<line x1="7.2" y1="223.5" x2="295.6" y2="223.5" stroke="#111" stroke-width="1" stroke-dasharray="1 1"/>
<line x1="151.5" y1="79" x2="151.5" y2="366.6" stroke="#111" stroke-width="1" stroke-dasharray="1 1"/>
<text x="134.3" y="95.9" font-family="Liberation Sans" font-size="10.6" fill="#cc0000" text-anchor="middle">N</text>
<line x1="214.34" y1="151.52" x2="235.81" y2="126.99" stroke="#0a50cf" stroke-width="2.8" stroke-linecap="round"/>
<line x1="265.5" y1="224.5" x2="279.4" y2="224.5" stroke="#ffff00" stroke-width="9" stroke-linecap="round"/>
<line x1="265.5" y1="224.5" x2="279.4" y2="224.5" stroke="#0a50cf" stroke-width="5" stroke-linecap="round"/>
<circle cx="150.6" cy="350" r="4.2" fill="none" stroke="#ffff00" stroke-width="1.9"/>
<rect x="202.1" y="152.7" width="14.9" height="10.7" rx="1" fill="#fff"/>
<text x="209.55" y="162.30" font-family="Liberation Sans" font-size="11.70" fill="#2a6de0" text-anchor="middle" textLength="12.7" lengthAdjust="spacingAndGlyphs">23</text>
<rect x="253.4" y="220.4" width="8.2" height="9.6" rx="1" fill="#fff"/>
<text x="257.50" y="228.90" font-family="Liberation Sans" font-size="10.07" fill="#2a6de0" text-anchor="middle" textLength="6.0" lengthAdjust="spacingAndGlyphs">7</text>
<rect x="138.4" y="332.2" width="14.6" height="10.0" rx="1" fill="#fff"/>
<text x="145.70" y="341.10" font-family="Liberation Sans" font-size="10.66" fill="#2a6de0" text-anchor="middle" textLength="12.4" lengthAdjust="spacingAndGlyphs">22</text>
<circle cx="145.4" cy="344.7" r="1.6" fill="#0a3fa0"/>
<rect x="137.4" y="346.9" width="15.2" height="9.6" rx="1" fill="#fff"/>
<text x="145.00" y="355.40" font-family="Liberation Sans" font-size="10.07" fill="#2a6de0" text-anchor="middle" textLength="13.0" lengthAdjust="spacingAndGlyphs">29</text>
<rect x="137.0" y="355.5" width="16.1" height="8.9" rx="1" fill="#fff"/>
<text x="145.05" y="363.30" font-family="Liberation Sans" font-size="9.03" fill="#2a6de0" text-anchor="middle" textLength="13.9" lengthAdjust="spacingAndGlyphs">40</text>
</svg>
<svg style="position:absolute;left:0;top:0" width="800" height="768">
<rect x="39" y="637" width="10" height="123.5" fill="#e6e6e6"/>
<rect x="70.3" y="632.5" width="30.3" height="128" fill="#e6e6e6"/>
<line x1="8" y1="645.50" x2="173" y2="645.50" stroke="#6e6e6e" stroke-width="1" stroke-dasharray="1 1"/>
<line x1="217" y1="645.50" x2="792" y2="645.50" stroke="#6e6e6e" stroke-width="1" stroke-dasharray="1 1"/>
<line x1="8" y1="657.50" x2="173" y2="657.50" stroke="#6e6e6e" stroke-width="1" stroke-dasharray="1 1"/>
<line x1="217" y1="657.50" x2="792" y2="657.50" stroke="#6e6e6e" stroke-width="1" stroke-dasharray="1 1"/>
<line x1="8" y1="670.50" x2="173" y2="670.50" stroke="#6e6e6e" stroke-width="1" stroke-dasharray="1 1"/>
<line x1="217" y1="670.50" x2="792" y2="670.50" stroke="#6e6e6e" stroke-width="1" stroke-dasharray="1 1"/>
<line x1="8" y1="683.50" x2="173" y2="683.50" stroke="#6e6e6e" stroke-width="1" stroke-dasharray="1 1"/>
<line x1="217" y1="683.50" x2="792" y2="683.50" stroke="#6e6e6e" stroke-width="1" stroke-dasharray="1 1"/>
<line x1="8" y1="696.50" x2="173" y2="696.50" stroke="#6e6e6e" stroke-width="1" stroke-dasharray="1 1"/>
<line x1="217" y1="696.50" x2="792" y2="696.50" stroke="#6e6e6e" stroke-width="1" stroke-dasharray="1 1"/>
<line x1="8" y1="708.50" x2="173" y2="708.50" stroke="#6e6e6e" stroke-width="1" stroke-dasharray="1 1"/>
<line x1="217" y1="708.50" x2="792" y2="708.50" stroke="#6e6e6e" stroke-width="1" stroke-dasharray="1 1"/>
<line x1="8" y1="721.50" x2="173" y2="721.50" stroke="#6e6e6e" stroke-width="1" stroke-dasharray="1 1"/>
<line x1="217" y1="721.50" x2="792" y2="721.50" stroke="#6e6e6e" stroke-width="1" stroke-dasharray="1 1"/>
<line x1="8" y1="734.50" x2="173" y2="734.50" stroke="#6e6e6e" stroke-width="1" stroke-dasharray="1 1"/>
<line x1="217" y1="734.50" x2="792" y2="734.50" stroke="#6e6e6e" stroke-width="1" stroke-dasharray="1 1"/>
<line x1="8" y1="747.50" x2="173" y2="747.50" stroke="#6e6e6e" stroke-width="1" stroke-dasharray="1 1"/>
<line x1="217" y1="747.50" x2="792" y2="747.50" stroke="#6e6e6e" stroke-width="1" stroke-dasharray="1 1"/>
<path d="M13.1 632.7 H7.8 V760.4 H173.7 V632.7 H163" fill="none" stroke="#000" stroke-width="2"/>
<line x1="64.7" y1="632.7" x2="110.9" y2="632.7" stroke="#000" stroke-width="2"/>
<path d="M214.7 760.4 V632.6 H482.3 M523.8 632.6 H792.7 V760.4 H214.7" fill="none" stroke="#000" stroke-width="2"/>
<text x="39.1" y="635.9" font-family="Liberation Sans" font-weight="bold" font-size="11" fill="#000" text-anchor="middle">VHF Lo</text>
<text x="137.4" y="636" font-family="Liberation Sans" font-weight="bold" font-size="11" fill="#000" text-anchor="middle">VHF Hi</text>
<text x="503.4" y="636" font-family="Liberation Sans" font-weight="bold" font-size="11" fill="#000" text-anchor="middle">UHF</text>
<text x="194" y="635.7" font-family="Liberation Sans" font-size="10.8" fill="#111" text-anchor="middle">dBm</text>
<text x="194.2" y="647.90" font-family="Liberation Sans" font-size="10.6" fill="#111" text-anchor="middle">-10</text>
<text x="194.2" y="660.68" font-family="Liberation Sans" font-size="10.6" fill="#111" text-anchor="middle">-20</text>
<text x="194.2" y="673.46" font-family="Liberation Sans" font-size="10.6" fill="#111" text-anchor="middle">-30</text>
<text x="194.2" y="686.24" font-family="Liberation Sans" font-size="10.6" fill="#111" text-anchor="middle">-40</text>
<text x="194.2" y="699.02" font-family="Liberation Sans" font-size="10.6" fill="#111" text-anchor="middle">-50</text>
<text x="194.2" y="711.80" font-family="Liberation Sans" font-size="10.6" fill="#111" text-anchor="middle">-60</text>
<text x="194.2" y="724.58" font-family="Liberation Sans" font-size="10.6" fill="#111" text-anchor="middle">-70</text>
<text x="194.2" y="737.36" font-family="Liberation Sans" font-size="10.6" fill="#111" text-anchor="middle">-80</text>
<text x="194.2" y="750.14" font-family="Liberation Sans" font-size="10.6" fill="#111" text-anchor="middle">-90</text>
<text x="194.2" y="761.5" font-family="Liberation Sans" font-size="9.2" fill="#111" text-anchor="middle">Channel</text>
<rect x="9.85" y="756" width="6.70" height="7" fill="#fff"/>
<text x="13.20" y="761.7" font-family="Liberation Sans" font-size="6.9" fill="#222" text-anchor="middle" textLength="4.3" lengthAdjust="spacing">2</text>
<rect x="30.65" y="756" width="6.70" height="7" fill="#fff"/>
<text x="34.00" y="761.7" font-family="Liberation Sans" font-size="6.9" fill="#222" text-anchor="middle" textLength="4.3" lengthAdjust="spacing">4</text>
<rect x="52.15" y="756" width="6.70" height="7" fill="#fff"/>
<text x="55.50" y="761.7" font-family="Liberation Sans" font-size="6.9" fill="#222" text-anchor="middle" textLength="4.3" lengthAdjust="spacing">5</text>
<rect x="61.65" y="756" width="6.70" height="7" fill="#fff"/>
<text x="65.00" y="761.7" font-family="Liberation Sans" font-size="6.9" fill="#222" text-anchor="middle" textLength="4.3" lengthAdjust="spacing">6</text>
<rect x="102.65" y="756" width="6.70" height="7" fill="#fff"/>
<text x="106.00" y="761.7" font-family="Liberation Sans" font-size="6.9" fill="#222" text-anchor="middle" textLength="4.3" lengthAdjust="spacing">7</text>
<rect x="124.15" y="756" width="6.70" height="7" fill="#fff"/>
<text x="127.50" y="761.7" font-family="Liberation Sans" font-size="6.9" fill="#222" text-anchor="middle" textLength="4.3" lengthAdjust="spacing">9</text>
<rect x="142.00" y="756" width="11.00" height="7" fill="#fff"/>
<text x="147.50" y="761.7" font-family="Liberation Sans" font-size="6.9" fill="#222" text-anchor="middle" textLength="8.6" lengthAdjust="spacing">11</text>
<rect x="162.00" y="756" width="11.00" height="7" fill="#fff"/>
<text x="167.50" y="761.7" font-family="Liberation Sans" font-size="6.9" fill="#222" text-anchor="middle" textLength="8.6" lengthAdjust="spacing">13</text>
<rect x="214.90" y="756" width="11.00" height="7" fill="#fff"/>
<text x="220.40" y="761.7" font-family="Liberation Sans" font-size="6.9" fill="#222" text-anchor="middle" textLength="8.6" lengthAdjust="spacing">14</text>
<rect x="235.47" y="756" width="11.00" height="7" fill="#fff"/>
<text x="240.97" y="761.7" font-family="Liberation Sans" font-size="6.9" fill="#222" text-anchor="middle" textLength="8.6" lengthAdjust="spacing">16</text>
<rect x="266.32" y="756" width="11.00" height="7" fill="#fff"/>
<text x="271.82" y="761.7" font-family="Liberation Sans" font-size="6.9" fill="#222" text-anchor="middle" textLength="8.6" lengthAdjust="spacing">19</text>
<rect x="297.17" y="756" width="11.00" height="7" fill="#fff"/>
<text x="302.67" y="761.7" font-family="Liberation Sans" font-size="6.9" fill="#222" text-anchor="middle" textLength="8.6" lengthAdjust="spacing">22</text>
<rect x="328.02" y="756" width="11.00" height="7" fill="#fff"/>
<text x="333.52" y="761.7" font-family="Liberation Sans" font-size="6.9" fill="#222" text-anchor="middle" textLength="8.6" lengthAdjust="spacing">25</text>
<rect x="358.88" y="756" width="11.00" height="7" fill="#fff"/>
<text x="364.38" y="761.7" font-family="Liberation Sans" font-size="6.9" fill="#222" text-anchor="middle" textLength="8.6" lengthAdjust="spacing">28</text>
<rect x="389.73" y="756" width="11.00" height="7" fill="#fff"/>
<text x="395.23" y="761.7" font-family="Liberation Sans" font-size="6.9" fill="#222" text-anchor="middle" textLength="8.6" lengthAdjust="spacing">31</text>
<rect x="420.58" y="756" width="11.00" height="7" fill="#fff"/>
<text x="426.08" y="761.7" font-family="Liberation Sans" font-size="6.9" fill="#222" text-anchor="middle" textLength="8.6" lengthAdjust="spacing">34</text>
<rect x="451.43" y="756" width="11.00" height="7" fill="#fff"/>
<text x="456.93" y="761.7" font-family="Liberation Sans" font-size="6.9" fill="#222" text-anchor="middle" textLength="8.6" lengthAdjust="spacing">37</text>
<rect x="482.28" y="756" width="11.00" height="7" fill="#fff"/>
<text x="487.78" y="761.7" font-family="Liberation Sans" font-size="6.9" fill="#222" text-anchor="middle" textLength="8.6" lengthAdjust="spacing">40</text>
<rect x="513.14" y="756" width="11.00" height="7" fill="#fff"/>
<text x="518.64" y="761.7" font-family="Liberation Sans" font-size="6.9" fill="#222" text-anchor="middle" textLength="8.6" lengthAdjust="spacing">43</text>
<rect x="543.99" y="756" width="11.00" height="7" fill="#fff"/>
<text x="549.49" y="761.7" font-family="Liberation Sans" font-size="6.9" fill="#222" text-anchor="middle" textLength="8.6" lengthAdjust="spacing">46</text>
<rect x="574.84" y="756" width="11.00" height="7" fill="#fff"/>
<text x="580.34" y="761.7" font-family="Liberation Sans" font-size="6.9" fill="#222" text-anchor="middle" textLength="8.6" lengthAdjust="spacing">49</text>
<rect x="605.69" y="756" width="11.00" height="7" fill="#fff"/>
<text x="611.19" y="761.7" font-family="Liberation Sans" font-size="6.9" fill="#222" text-anchor="middle" textLength="8.6" lengthAdjust="spacing">52</text>
<rect x="636.54" y="756" width="11.00" height="7" fill="#fff"/>
<text x="642.04" y="761.7" font-family="Liberation Sans" font-size="6.9" fill="#222" text-anchor="middle" textLength="8.6" lengthAdjust="spacing">55</text>
<rect x="667.40" y="756" width="11.00" height="7" fill="#fff"/>
<text x="672.90" y="761.7" font-family="Liberation Sans" font-size="6.9" fill="#222" text-anchor="middle" textLength="8.6" lengthAdjust="spacing">58</text>
<rect x="698.25" y="756" width="11.00" height="7" fill="#fff"/>
<text x="703.75" y="761.7" font-family="Liberation Sans" font-size="6.9" fill="#222" text-anchor="middle" textLength="8.6" lengthAdjust="spacing">61</text>
<rect x="729.10" y="756" width="11.00" height="7" fill="#fff"/>
<text x="734.60" y="761.7" font-family="Liberation Sans" font-size="6.9" fill="#222" text-anchor="middle" textLength="8.6" lengthAdjust="spacing">64</text>
<rect x="759.95" y="756" width="11.00" height="7" fill="#fff"/>
<text x="765.45" y="761.7" font-family="Liberation Sans" font-size="6.9" fill="#222" text-anchor="middle" textLength="8.6" lengthAdjust="spacing">67</text>
<rect x="780.52" y="756" width="11.00" height="7" fill="#fff"/>
<text x="786.02" y="761.7" font-family="Liberation Sans" font-size="6.9" fill="#222" text-anchor="middle" textLength="8.6" lengthAdjust="spacing">69</text>
<rect x="307.8" y="732.4" width="9.4" height="3.7" rx="1.2" fill="#0a50cf" stroke="#f4e8c0" stroke-width="0.6"/>
<text transform="translate(316.2,728.8) rotate(-90)" font-family="Liberation Sans" font-size="10" fill="#1a64dc" stroke="#fff" stroke-width="2" paint-order="stroke" textLength="43.8" lengthAdjust="spacingAndGlyphs">W23DR-D</text>
<rect x="100.8" y="754.4" width="11" height="4.4" rx="2.2" fill="#0a50cf" stroke="#ffff00" stroke-width="2"/>
<text transform="translate(109.5,750.2) rotate(-90)" font-family="Liberation Sans" font-size="10" fill="#1a64dc" stroke="#fff" stroke-width="2" paint-order="stroke" textLength="43.9" lengthAdjust="spacingAndGlyphs">W07DN-D</text>
</svg>
</body></html>
